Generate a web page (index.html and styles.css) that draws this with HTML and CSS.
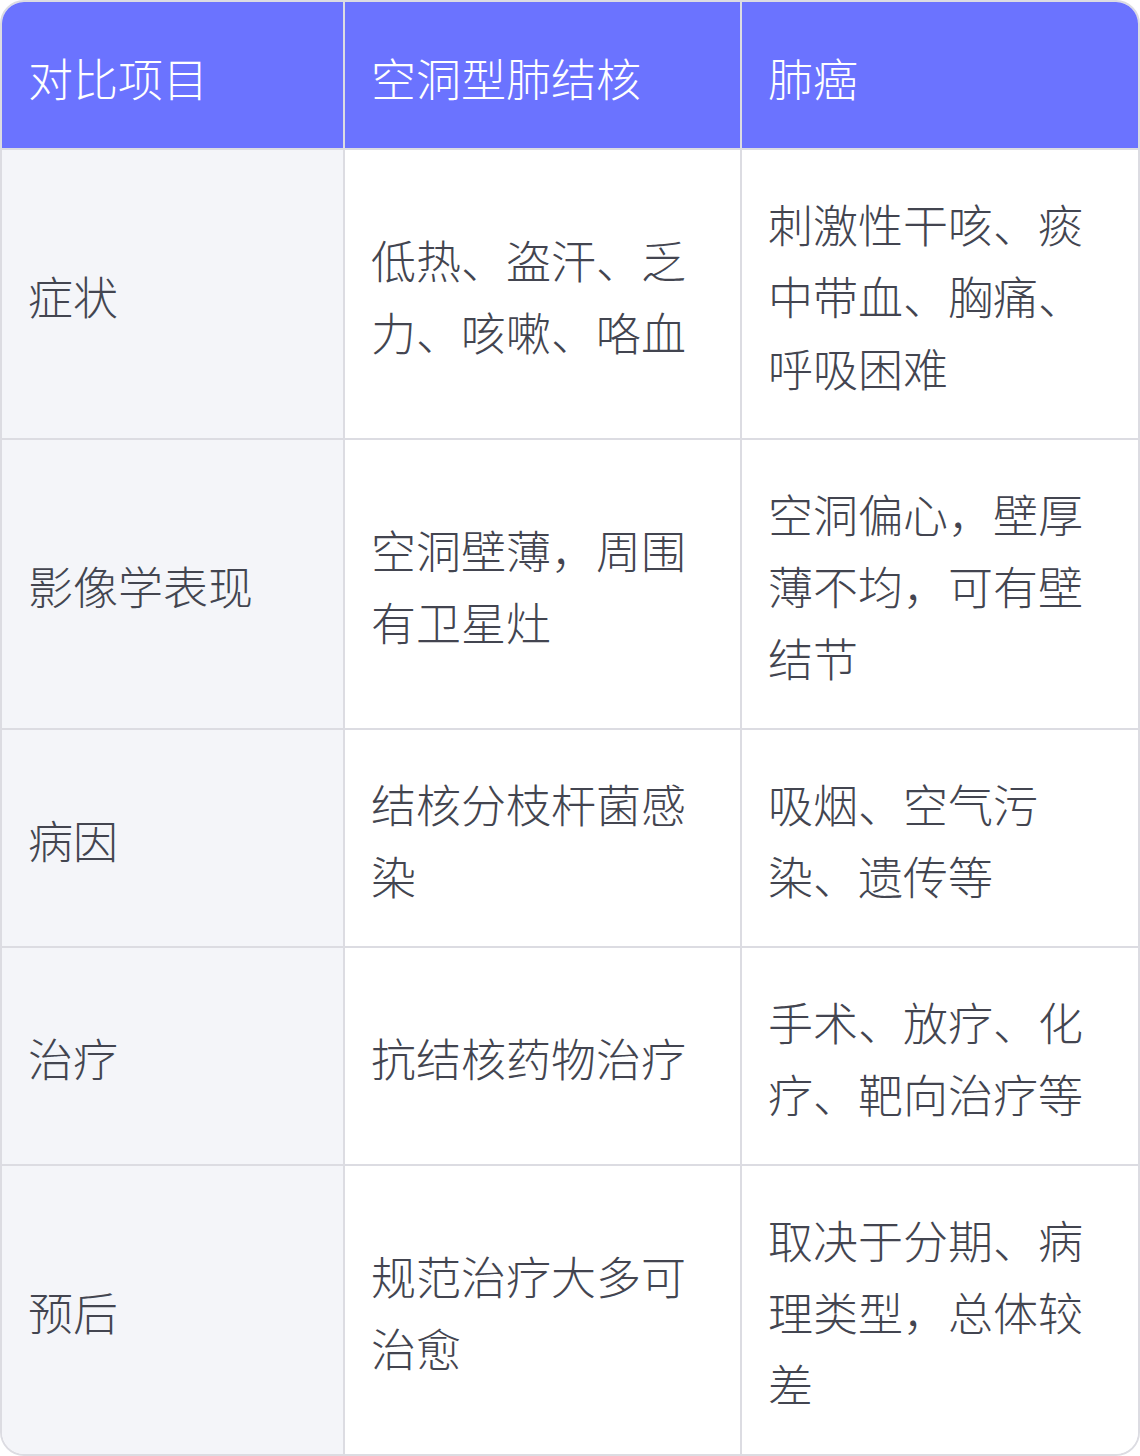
FILE: index.html
```html
<!DOCTYPE html>
<html lang="zh">
<head>
<meta charset="utf-8">
<link rel="stylesheet" href="styles.css">
</head>
<body>
<div class="wrap">
<table class="cmp">
<colgroup><col class="c1"><col class="c2"><col class="c3"></colgroup>
<thead>
<tr><th>对比项目</th><th>空洞型肺结核</th><th>肺癌</th></tr>
</thead>
<tbody>
<tr><td class="k">症状</td><td>低热、盗汗、乏力、咳嗽、咯血</td><td>刺激性干咳、痰中带血、胸痛、呼吸困难</td></tr>
<tr><td class="k">影像学表现</td><td>空洞壁薄，周围有卫星灶</td><td>空洞偏心，壁厚薄不均，可有壁结节</td></tr>
<tr><td class="k">病因</td><td>结核分枝杆菌感染</td><td>吸烟、空气污染、遗传等</td></tr>
<tr><td class="k">治疗</td><td>抗结核药物治疗</td><td>手术、放疗、化疗、靶向治疗等</td></tr>
<tr><td class="k">预后</td><td>规范治疗大多可治愈</td><td>取决于分期、病理类型，总体较差</td></tr>
</tbody>
</table>
</div>
</body>
</html>
```

FILE: styles.css
```css
html, body {
  margin: 0;
  padding: 0;
  background: #ffffff;
}
.wrap {
  width: 1136px;
  border: 2px solid #dcdce2;
  border-radius: 24px;
  overflow: hidden;
}
.cmp {
  width: 1136px;
  border-collapse: collapse;
  border-style: hidden;
  table-layout: fixed;
  font-family: "Noto Sans CJK SC", "Noto Sans", sans-serif;
  font-size: 45px;
  line-height: 72px;
  color: #434550;
}
.c1 { width: 342px; }
.c2 { width: 397px; }
.c3 { width: 397px; }
.cmp th, .cmp td {
  border: 2px solid #dcdce2;
  text-align: left;
  vertical-align: middle;
  padding: 38px 26px 34px 26px;
  font-weight: 300;
}
.cmp th {
  background: #6b73ff;
  color: #ffffff;
  padding: 40px 26px 34px 26px;
}
.cmp td {
  background: #ffffff;
}
.cmp td.k {
  background: #f4f5f9;
}
```
